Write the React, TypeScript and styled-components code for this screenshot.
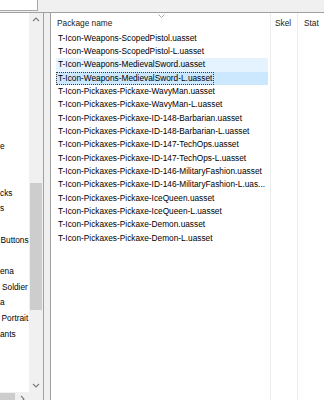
import React from "react";
import styled, { createGlobalStyle } from "styled-components";

const GlobalStyle = createGlobalStyle`
  html, body { margin: 0; padding: 0; background: #f0f0f0; overflow: hidden; }
  body { font-family: "Liberation Sans", Arial, sans-serif; font-size: 8.3px; color: #000; }
  * { box-sizing: border-box; }
`;

const Window = styled.div`
  width: 324px;
  height: 400px;
  overflow: hidden;
  display: flex;
  flex-direction: column;
  background: #f0f0f0;
`;

const TopStrip = styled.div`
  height: 12px;
  flex: none;
  display: flex;
  align-items: flex-start;
`;

const SearchBox = styled.div`
  width: 38px;
  height: 11px;
  background: #fff;
  border-right: 1px solid #a8a8a8;
  border-bottom: 1px solid #a8a8a8;
`;

const Main = styled.div`
  flex: none;
  height: 420px;
  display: flex;
  border-top: 1px solid #a0a0a0;
`;

const TreePanel = styled.div`
  width: 44px;
  flex: none;
  border-right: 1px solid #a0a0a0;
  display: grid;
  grid-template-columns: 29px 14px;
  grid-template-rows: 379px 13px;
  background: #fff;
`;

const TreeArea = styled.div`
  overflow: hidden;
  background: #fff;
  display: flex;
  flex-direction: column;
`;

const TreeRow = styled.div<{ $indent: number }>`
  height: 15.7px;
  line-height: 15.7px;
  flex: none;
  white-space: nowrap;
  padding-left: ${(p) => p.$indent}px;
`;

const VScroll = styled.div`
  background: #f0f0f0;
  display: flex;
  flex-direction: column;
`;

const ScrollButton = styled.div`
  flex: none;
  width: 13px;
  height: 13px;
  display: flex;
  align-items: center;
  justify-content: center;
  & > svg { display: block; }
`;

const VButton = styled(ScrollButton)`
  width: auto;
`;

const VTrack = styled.div`
  flex: 1;
  display: flex;
  flex-direction: column;
  align-items: stretch;
  padding: 0 1px;
`;

const VThumb = styled.div<{ $offset: number; $size: number }>`
  margin-top: ${(p) => p.$offset}px;
  height: ${(p) => p.$size}px;
  background: #cdcdcd;
`;

const HScroll = styled.div`
  background: #f0f0f0;
  display: flex;
`;

const HTrack = styled.div`
  flex: 1;
  display: flex;
  padding: 1px 0;
`;

const HThumb = styled.div<{ $size: number }>`
  width: ${(p) => p.$size}px;
  background: #cdcdcd;
`;

const Corner = styled.div`
  background: #f0f0f0;
`;

const Splitter = styled.div`
  width: 6px;
  flex: none;
`;

const ListPanel = styled.div`
  flex: none;
  width: 400px;
  border-left: 1px solid #a0a0a0;
  background: #fff;
  display: flex;
  align-items: stretch;
`;

const Column = styled.div<{ $width: number }>`
  width: ${(p) => p.$width}px;
  flex: none;
  border-right: 1px solid #ececec;
  display: flex;
  flex-direction: column;
`;

const HeaderCell = styled.div<{ $pad: number }>`
  position: relative;
  height: 18.7px;
  padding-top: 2px;
  line-height: 16.7px;
  padding-left: ${(p) => p.$pad}px;
  color: #1a1a1a;
  white-space: nowrap;
  flex: none;
`;

const SortArrow = styled.svg`
  position: absolute;
  top: 1px;
  left: 50%;
  margin-left: -3px;
`;

const Row = styled.div<{ $state?: "hot" | "selected" }>`
  height: 13.33px;
  line-height: 11.33px;
  margin: 0 2px 0 5px;
  white-space: nowrap;
  overflow: hidden;
  flex: none;
  background: ${(p) =>
    p.$state === "selected" ? "#cce8ff" : p.$state === "hot" ? "#e5f3ff" : "transparent"};
`;

const Label = styled.span<{ $focus?: boolean }>`
  display: inline-block;
  height: 100%;
  padding: 0 1px;
  border: 1px dotted ${(p) => (p.$focus ? "#3c3c3c" : "transparent")};
`;

const Chevron = ({ dir }: { dir: "up" | "down" | "right" }) => {
  const pts =
    dir === "up" ? "1,4 4,1 7,4" : dir === "down" ? "1,1 4,4 7,1" : "1,1 4,4 1,7";
  const w = dir === "right" ? 5 : 8;
  const h = dir === "right" ? 8 : 5;
  return (
    <svg width={w} height={h} viewBox={`0 0 ${w} ${h}`}>
      <polyline points={pts} fill="none" stroke="#7a7a7a" strokeWidth="1.1" />
    </svg>
  );
};

const treeItems: { row: number; text: string; indent: number }[] = [
  { row: 8, text: "e", indent: 0 },
  { row: 11, text: "cks", indent: 0 },
  { row: 12, text: "s", indent: 0 },
  { row: 14, text: "Buttons", indent: 0.5 },
  { row: 16, text: "ena", indent: 0 },
  { row: 17, text: "Soldier", indent: 2 },
  { row: 18, text: "a", indent: 0 },
  { row: 19, text: "Portrait", indent: 1.5 },
  { row: 20, text: "ants", indent: 0 },
];

const files: { name: string; state?: "hot" | "selected" }[] = [
  { name: "T-Icon-Weapons-ScopedPistol.uasset" },
  { name: "T-Icon-Weapons-ScopedPistol-L.uasset" },
  { name: "T-Icon-Weapons-MedievalSword.uasset", state: "hot" },
  { name: "T-Icon-Weapons-MedievalSword-L.uasset", state: "selected" },
  { name: "T-Icon-Pickaxes-Pickaxe-WavyMan.uasset" },
  { name: "T-Icon-Pickaxes-Pickaxe-WavyMan-L.uasset" },
  { name: "T-Icon-Pickaxes-Pickaxe-ID-148-Barbarian.uasset" },
  { name: "T-Icon-Pickaxes-Pickaxe-ID-148-Barbarian-L.uasset" },
  { name: "T-Icon-Pickaxes-Pickaxe-ID-147-TechOps.uasset" },
  { name: "T-Icon-Pickaxes-Pickaxe-ID-147-TechOps-L.uasset" },
  { name: "T-Icon-Pickaxes-Pickaxe-ID-146-MilitaryFashion.uasset" },
  { name: "T-Icon-Pickaxes-Pickaxe-ID-146-MilitaryFashion-L.uas..." },
  { name: "T-Icon-Pickaxes-Pickaxe-IceQueen.uasset" },
  { name: "T-Icon-Pickaxes-Pickaxe-IceQueen-L.uasset" },
  { name: "T-Icon-Pickaxes-Pickaxe-Demon.uasset" },
  { name: "T-Icon-Pickaxes-Pickaxe-Demon-L.uasset" },
];

export default function App() {
  const rows = Array.from({ length: 24 }, (_, i) => treeItems.find((t) => t.row === i));
  return (
    <>
      <GlobalStyle />
      <Window>
        <TopStrip>
          <SearchBox />
        </TopStrip>
        <Main>
          <TreePanel>
            <TreeArea>
              {rows.map((t, i) => (
                <TreeRow key={i} $indent={t ? t.indent : 0}>
                  {t ? t.text : ""}
                </TreeRow>
              ))}
            </TreeArea>
            <VScroll>
              <VButton>
                <Chevron dir="up" />
              </VButton>
              <VTrack>
                <VThumb $offset={157} $size={127} />
              </VTrack>
              <VButton>
                <Chevron dir="down" />
              </VButton>
            </VScroll>
            <HScroll>
              <HTrack>
                <HThumb $size={15} />
              </HTrack>
              <ScrollButton>
                <Chevron dir="right" />
              </ScrollButton>
            </HScroll>
            <Corner />
          </TreePanel>
          <Splitter />
          <ListPanel>
            <Column $width={220}>
              <HeaderCell $pad={6}>
                <SortArrow width="7" height="4" viewBox="0 0 7 4">
                  <polyline points="0.5,0.5 3.5,3.5 6.5,0.5" fill="none" stroke="#a8a8a8" strokeWidth="1" />
                </SortArrow>
                Package name
              </HeaderCell>
              {files.map((f) => (
                <Row key={f.name} $state={f.state}>
                  <Label $focus={f.state === "selected"}>{f.name}</Label>
                </Row>
              ))}
            </Column>
            <Column $width={27}>
              <HeaderCell $pad={4}>Skel</HeaderCell>
            </Column>
            <Column $width={60}>
              <HeaderCell $pad={6}>Stat</HeaderCell>
            </Column>
          </ListPanel>
        </Main>
      </Window>
    </>
  );
}
